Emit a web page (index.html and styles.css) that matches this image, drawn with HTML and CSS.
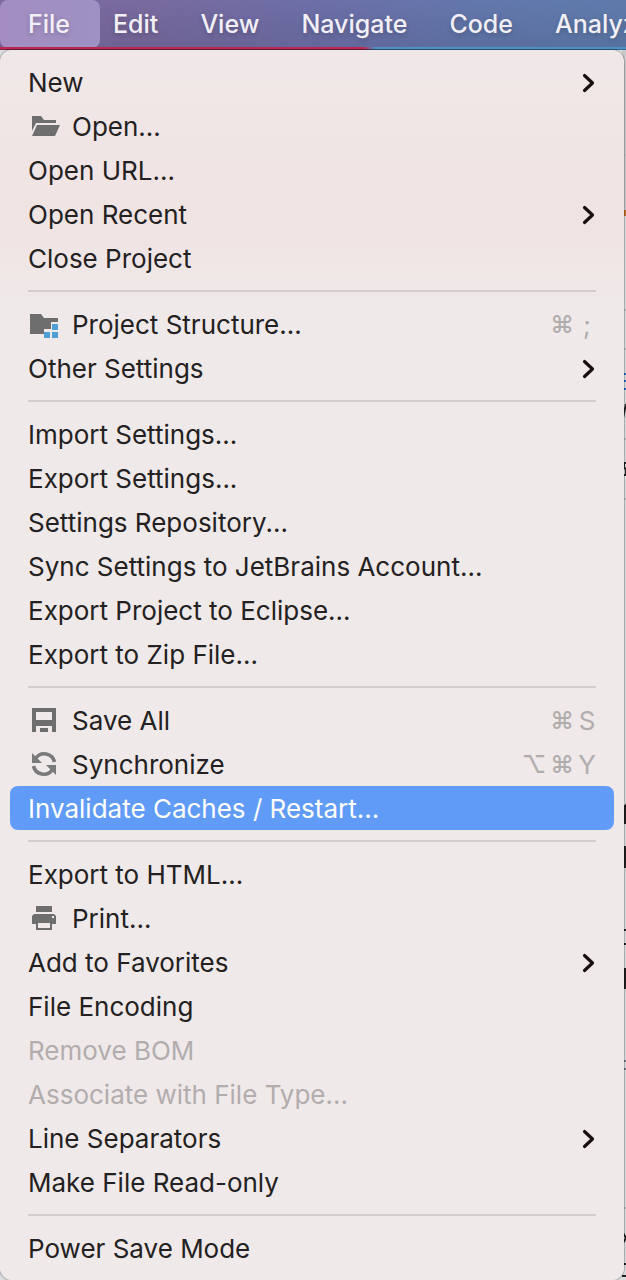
FILE: index.html
```html
<!DOCTYPE html>
<html lang="en">
<head>
<meta charset="utf-8">
<title>File menu</title>
<link rel="stylesheet" href="styles.css">
</head>
<body>
<svg class="defs" aria-hidden="true">
  <symbol id="chevron" viewBox="0 0 14 20"><path d="M2.500 2.500 10.500 10 2.500 17.500" fill="none" stroke="#17100f" stroke-width="3.200" stroke-linecap="round" stroke-linejoin="round"/></symbol>
</svg>
<nav class="menubar" aria-label="Menu bar">
  <button class="menubar-item is-open" type="button">File</button>
  <button class="menubar-item" type="button">Edit</button>
  <button class="menubar-item" type="button">View</button>
  <button class="menubar-item" type="button">Navigate</button>
  <button class="menubar-item" type="button">Code</button>
  <button class="menubar-item" type="button">Analyze</button>
</nav>
<main class="window">
  <svg class="editor-edge" viewBox="0 0 4 1230" aria-hidden="true">
    <path d="M0 0h4v160H0z" fill="#c9c9cb"/>
    <path d="M0 105h4M0 260h4M0 299h4M0 389h4M0 449h4M0 1158h4" stroke="#bfc2c4" stroke-width="2"/>
    <path d="M0 160h4v6H0z" fill="#c4722f"/>
    <path d="M0 324h4M0 331h4M0 339h4" stroke="#2e6fbd" stroke-width="2"/>
    <path d="M4 354 1 368M4 413H2v4l2 3v5H1M3 755v19M3 755h1M3 765h1M3 796v22M1 880h3M1 894h3M1 1183l3 5-3 5M1 1214h3M0 1226h4" fill="none" stroke="#222" stroke-width="2"/>
    <path d="M1 918h3v21H1z" fill="#222"/>
    <path d="M1 1011h3M1 1019h3" stroke="#777c85" stroke-width="2"/>
  </svg>
  <div class="menu" role="menu" aria-label="File">
    <button class="item" type="button" role="menuitem">New<svg class="chevron"><use href="#chevron"/></svg></button>
    <button class="item" type="button" role="menuitem"><svg class="icon" viewBox="0 0 32 32"><path d="M4 6h9l3 4h12v3H8L4 21z" fill="#6e6e6e"/><path d="M9 15h23l-5 11H4z" fill="#6e6e6e"/></svg>Open...</button>
    <button class="item" type="button" role="menuitem">Open URL...</button>
    <button class="item" type="button" role="menuitem">Open Recent<svg class="chevron"><use href="#chevron"/></svg></button>
    <button class="item" type="button" role="menuitem">Close Project</button>
    <hr class="separator">
    <button class="item" type="button" role="menuitem"><svg class="icon" viewBox="0 0 32 32"><path d="M2 6h11l3 4h14v4h-7v7h-7v5H2z" fill="#6e6e6e"/><path d="M24 16h6v6h-6zM16 24h6v6h-6zM24 24h6v6h-6z" fill="#4f9fd6"/></svg>Project Structure...<span class="keys"><span class="symbol">⌘</span><kbd class="key">;</kbd></span></button>
    <button class="item" type="button" role="menuitem">Other Settings<svg class="chevron"><use href="#chevron"/></svg></button>
    <hr class="separator">
    <button class="item" type="button" role="menuitem">Import Settings...</button>
    <button class="item" type="button" role="menuitem">Export Settings...</button>
    <button class="item" type="button" role="menuitem">Settings Repository...</button>
    <button class="item" type="button" role="menuitem">Sync Settings to JetBrains Account...</button>
    <button class="item" type="button" role="menuitem">Export Project to Eclipse...</button>
    <button class="item" type="button" role="menuitem">Export to Zip File...</button>
    <hr class="separator">
    <button class="item" type="button" role="menuitem"><svg class="icon" viewBox="0 0 32 32"><path fill-rule="evenodd" d="M4 4h24v24h-4v-6H8v6H4zM8 8v8h16V8z" fill="#6e6e6e"/><path d="M12 24h8v4h-8z" fill="#6e6e6e"/></svg>Save All<span class="keys"><span class="symbol">⌘</span><kbd class="key">S</kbd></span></button>
    <button class="item" type="button" role="menuitem"><svg class="icon" viewBox="0 0 32 32"><path d="M7.500 10.500A10.500 10.500 0 0 1 26.500 14M24.500 21.500A10.500 10.500 0 0 1 5.500 18" fill="none" stroke="#7a7a7a" stroke-width="3.600"/><path d="M4 5v10h10zM28 27V17H18z" fill="#7a7a7a"/></svg>Synchronize<span class="keys"><span class="symbol">⌥</span><span class="symbol">⌘</span><kbd class="key">Y</kbd></span></button>
    <button class="item is-selected" type="button" role="menuitem">Invalidate Caches / Restart...</button>
    <hr class="separator">
    <button class="item" type="button" role="menuitem">Export to HTML...</button>
    <button class="item" type="button" role="menuitem"><svg class="icon" viewBox="0 0 32 32"><path d="M8 4h16v6H8z" fill="#6e6e6e"/><path fill-rule="evenodd" d="M6 12h20l2 2v8h-4v6H8v-6H4v-8zM10 21v5h12v-5zM24 14v2h2v-2z" fill="#6e6e6e"/></svg>Print...</button>
    <button class="item" type="button" role="menuitem">Add to Favorites<svg class="chevron"><use href="#chevron"/></svg></button>
    <button class="item" type="button" role="menuitem">File Encoding</button>
    <button class="item" type="button" role="menuitem" disabled>Remove BOM</button>
    <button class="item" type="button" role="menuitem" disabled>Associate with File Type...</button>
    <button class="item" type="button" role="menuitem">Line Separators<svg class="chevron"><use href="#chevron"/></svg></button>
    <button class="item" type="button" role="menuitem">Make File Read-only</button>
    <hr class="separator">
    <button class="item" type="button" role="menuitem">Power Save Mode</button>
  </div>
</main>
</body>
</html>
```
FILE: styles.css
```css
* {
  box-sizing: border-box;
}

body {
  margin: 0;
  overflow-x: hidden;
  background: #dcdfe0;
  color: #232121;
  font-family: Inter, "Liberation Sans", sans-serif;
  font-size: 26px;
}

button {
  border: 0;
  background: none;
  color: inherit;
  font: inherit;
  text-align: left;
  white-space: nowrap;
}

.defs {
  position: absolute;
  width: 0;
  height: 0;
}

.menubar {
  position: relative;
  display: flex;
  height: 50px;
  padding-bottom: 2px;
  overflow: hidden;
  background: linear-gradient(rgba(0, 0, 0, 0), rgba(0, 0, 0, 0.08)), linear-gradient(90deg, #7d699d, #776a9f 25%, #6c6fa8 52%, #6377ac 75%, #5e7bac);
}

.menubar::after {
  content: "";
  position: absolute;
  inset: auto 0 0;
  height: 2px;
  border-bottom: 1px solid rgba(30, 30, 60, 0.4);
  background: linear-gradient(90deg, #bd2850 58%, #4b93c4 60%);
}

.menubar-item {
  flex: none;
  padding: 0 21px;
  color: #f2eff6;
  font-size: 25px;
  font-weight: 500;
  text-shadow: 0 2px 5px rgba(0, 0, 0, 0.2);
}

.menubar-item.is-open {
  margin-right: -8px;
  padding: 0 30px 0 28px;
  border-radius: 8px;
  background: linear-gradient(90deg, #a48dc1, #9d91c3);
}

.window {
  position: relative;
}

.editor-edge {
  position: absolute;
  top: 0;
  right: 0;
  width: 4px;
  height: 1230px;
}

.menu {
  position: relative;
  display: flex;
  flex-direction: column;
  margin-right: 2px;
  padding: 10px;
  border-radius: 12px;
  background: linear-gradient(#f0e8e8, #f0e4e4 120px, #f0e4e3 180px, #efe9e9 260px, #efe9e9);
  box-shadow: 0 0 1px 1px rgba(0, 0, 0, 0.25);
}

.item {
  display: flex;
  align-items: center;
  height: 44px;
  padding: 0 18px;
  border-radius: 8px;
}

.item:disabled {
  color: #b2adad;
}

.item.is-selected {
  background: #619bf8;
  color: #fff;
}

.icon {
  width: 32px;
  height: 32px;
  margin-right: 12px;
}

.chevron {
  width: 14px;
  height: 20px;
  margin: 2px 0 0 auto;
}

.keys {
  display: flex;
  align-items: center;
  gap: 4px;
  margin-left: auto;
  color: #b2adad;
}

.symbol {
  font-size: 24px;
  font-weight: 500;
}

.key {
  min-width: 18px;
  font: inherit;
  text-align: center;
}

.separator {
  width: auto;
  height: 2px;
  margin: 10px 18px;
  border: 0;
  background: #d3cdcd;
}
```
